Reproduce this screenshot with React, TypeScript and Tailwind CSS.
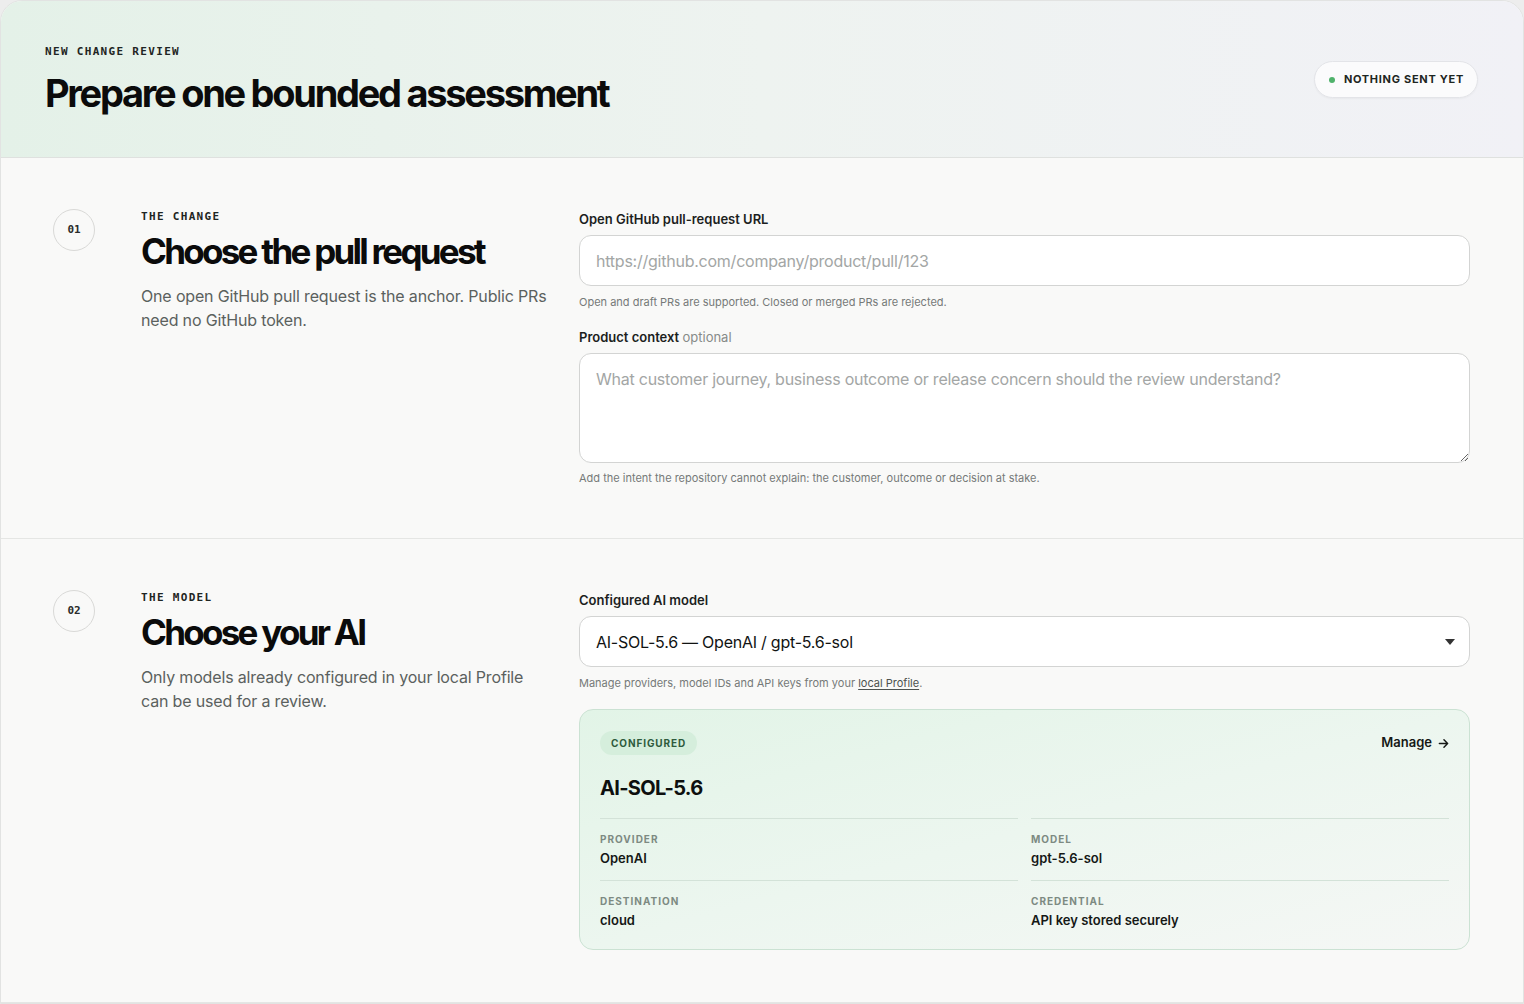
import React from "react";

function Section({
  num,
  eyebrow,
  title,
  desc,
  children,
}: {
  num: string;
  eyebrow: string;
  title: string;
  desc: string;
  children: React.ReactNode;
}) {
  return (
    <section className="flex border-b border-[#e5e6e4] pt-[51px] pb-[52px] pl-[52px] pr-[53px]">
      <div className="flex h-[42px] w-[42px] shrink-0 items-center justify-center rounded-full border border-[#d9d9d7] font-['DejaVu_Sans_Mono',monospace] text-[11px] font-bold text-[#2a2c2b]">
        {num}
      </div>
      <div className="ml-[46px] w-[408px] shrink-0">
        <div className="pt-[1px] font-['DejaVu_Sans_Mono',monospace] text-[11px] font-bold leading-[14px] tracking-[0.12em] text-[#1f2523]">
          {eyebrow}
        </div>
        <h2 className="mt-[7px] text-[35px] font-bold leading-[40px] tracking-[-0.078em] text-[#0b0b0b]">
          {title}
        </h2>
        <p className="mt-[13px] text-[16px] leading-[24px] tracking-[-0.01em] text-[#5b615e]">{desc}</p>
      </div>
      <div className="ml-[30px] min-w-0 flex-1">{children}</div>
    </section>
  );
}

function Label({ children }: { children: React.ReactNode }) {
  return (
    <div className="mb-[7px] pt-[1px] text-[13px] font-semibold leading-[18px] text-[#1c1f1e]">{children}</div>
  );
}

function Hint({ children, className = "" }: { children: React.ReactNode; className?: string }) {
  return <div className={`text-[11px] leading-[16px] text-[#767a78] ${className}`}>{children}</div>;
}

function Cell({ label, value }: { label: string; value: string }) {
  return (
    <div className="border-t border-[#d3e2d8] pt-[13px]">
      <div className="text-[10px] font-bold leading-[14px] tracking-[0.1em] text-[#7d8a82]">{label}</div>
      <div className="mt-[3px] text-[13px] font-semibold leading-[18px] text-[#151816]">{value}</div>
    </div>
  );
}

export default function App() {
  return (
    <div className="min-h-screen bg-[#ededed] font-['Inter',sans-serif]">
      <div className="overflow-hidden rounded-t-[22px] border border-[#e2e3e2] bg-[#f9f9f8]">
        <header className="flex items-center justify-between border-b border-[#dfe1df] bg-gradient-to-r from-[#e4f1e8] via-[#eef3f0] to-[#f1f1f6] pb-[43px] pl-[44px] pr-[45px] pt-[44px]">
          <div>
            <div className="font-['DejaVu_Sans_Mono',monospace] text-[11px] font-bold leading-[14px] tracking-[0.12em] text-[#1f2523]">
              NEW CHANGE REVIEW
            </div>
            <h1 className="mt-[13px] text-[38px] font-bold leading-[42px] tracking-[-0.06em] text-[#0b0b0b]">
              Prepare one bounded assessment
            </h1>
          </div>
          <div className="flex h-[37px] items-center gap-[9px] rounded-full border border-[#e3e4e8] bg-white/70 pl-[14px] pr-[13px] shadow-[0_1px_2px_rgba(0,0,0,0.04)]">
            <span className="h-[6px] w-[6px] rounded-full bg-[#4fb26b]" />
            <span className="text-[11px] font-bold tracking-[0.065em] text-[#1e2622]">NOTHING SENT YET</span>
          </div>
        </header>

        <Section
          num="01"
          eyebrow="THE CHANGE"
          title="Choose the pull request"
          desc="One open GitHub pull request is the anchor. Public PRs need no GitHub token."
        >
          <Label>Open GitHub pull-request URL</Label>
          <input
            className="block h-[51px] w-full rounded-[12px] border border-[#d3d4d3] bg-white px-[16px] text-[16px] tracking-[-0.015em] text-[#1c1f1e] outline-none placeholder:text-[#a3a6a5]"
            placeholder="https://github.com/company/product/pull/123"
          />
          <Hint className="mt-[8px]">Open and draft PRs are supported. Closed or merged PRs are rejected.</Hint>
          <div className="mt-[17px]">
            <Label>
              Product context <span className="font-normal text-[#878b89]">optional</span>
            </Label>
          </div>
          <textarea
            className="block h-[110px] w-full resize-y rounded-[12px] border border-[#d3d4d3] bg-white px-[16px] py-[13px] text-[16px] leading-[24px] tracking-[-0.015em] text-[#1c1f1e] outline-none placeholder:text-[#a3a6a5]"
            placeholder="What customer journey, business outcome or release concern should the review understand?"
          />
          <Hint className="mt-[7px]">Add the intent the repository cannot explain: the customer, outcome or decision at stake.</Hint>
        </Section>

        <Section
          num="02"
          eyebrow="THE MODEL"
          title="Choose your AI"
          desc="Only models already configured in your local Profile can be used for a review."
        >
          <Label>Configured AI model</Label>
          <div className="flex h-[51px] w-full items-center justify-between rounded-[12px] border border-[#d3d4d3] bg-white pl-[16px] pr-[14px] text-[16px] tracking-[-0.015em] text-[#111312]">
            <span>AI-SOL-5.6 — OpenAI / gpt-5.6-sol</span>
            <svg width="10" height="6" viewBox="0 0 10 6">
              <path d="M0 0 L10 0 L5 6 Z" fill="#333" />
            </svg>
          </div>
          <Hint className="mt-[8px]">
            Manage providers, model IDs and API keys from your{" "}
            <span className="text-[#4d5250] underline underline-offset-2">local Profile</span>.
          </Hint>

          <div className="mt-[18px] rounded-[14px] border border-[#cbe2d3] bg-gradient-to-br from-[#e2f4e7] via-[#ecf6ef] to-[#f5f7f5] px-[20px] pb-[20px] pt-[21px]">
            <div className="flex items-center justify-between">
              <span className="flex h-[24px] items-center rounded-full bg-[#d5eedc] px-[11px] text-[10px] font-bold tracking-[0.09em] text-[#2e5b3c]">
                CONFIGURED
              </span>
              <span className="flex items-center gap-[6px] text-[13px] font-semibold text-[#151816]">
                Manage
                <svg width="11" height="11" viewBox="0 0 12 12" fill="none" stroke="#151816" strokeWidth="1.6" strokeLinecap="round" strokeLinejoin="round">
                  <path d="M1.5 6h9M6.5 2l4 4-4 4" />
                </svg>
              </span>
            </div>
            <div className="mt-[19px] text-[20px] font-bold leading-[28px] tracking-[-0.035em] text-[#0d0f0e]">AI-SOL-5.6</div>
            <div className="mt-[16px] grid grid-cols-2 gap-x-[13px] gap-y-[13px]">
              <Cell label="PROVIDER" value="OpenAI" />
              <Cell label="MODEL" value="gpt-5.6-sol" />
              <Cell label="DESTINATION" value="cloud" />
              <Cell label="CREDENTIAL" value="API key stored securely" />
            </div>
          </div>
        </Section>
      </div>
    </div>
  );
}
